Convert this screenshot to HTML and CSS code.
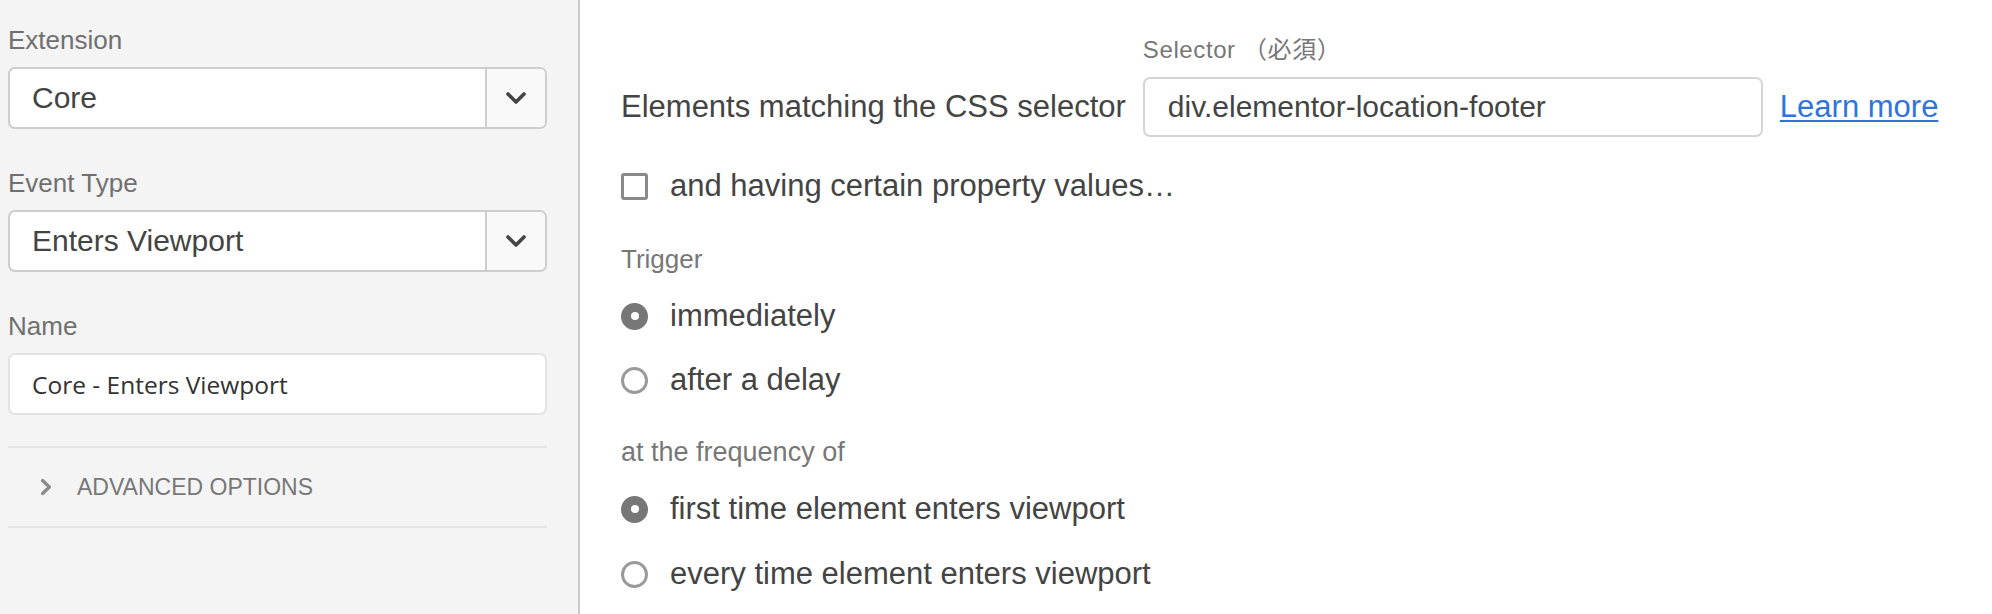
FILE: index.html
```html
<!DOCTYPE html>
<html lang="en">
<head>
<meta charset="utf-8">
<title>Enters Viewport</title>
<link rel="stylesheet" href="styles.css">
</head>
<body>
<div class="page">
  <aside class="sidebar">
    <div class="group">
      <div class="label">Extension</div>
      <div class="select">
        <div class="select-value">Core</div>
        <div class="select-arrow">
          <svg width="20" height="12" viewBox="0 0 20 12"><polyline points="2,2 10,10 18,2" fill="none" stroke="#444" stroke-width="3.6" stroke-linecap="round" stroke-linejoin="round"/></svg>
        </div>
      </div>
    </div>
    <div class="group">
      <div class="label">Event Type</div>
      <div class="select">
        <div class="select-value">Enters Viewport</div>
        <div class="select-arrow">
          <svg width="20" height="12" viewBox="0 0 20 12"><polyline points="2,2 10,10 18,2" fill="none" stroke="#444" stroke-width="3.6" stroke-linecap="round" stroke-linejoin="round"/></svg>
        </div>
      </div>
    </div>
    <div class="group">
      <div class="label">Name</div>
      <div class="text-input">Core - Enters Viewport</div>
    </div>
    <div class="divider"></div>
    <div class="advanced">
      <svg class="adv-chevron" width="12" height="18" viewBox="0 0 12 18"><polyline points="2.5,2.5 9.5,9 2.5,15.5" fill="none" stroke="#8a8a8a" stroke-width="3.2" stroke-linecap="round" stroke-linejoin="round"/></svg>
      <span class="adv-text">ADVANCED OPTIONS</span>
    </div>
    <div class="divider"></div>
  </aside>
  <main class="content">
    <div class="selector-row">
      <div class="row-text">Elements matching the CSS selector</div>
      <div class="field">
        <div class="field-label">Selector （必須）</div>
        <div class="field-input">div.elementor-location-footer</div>
      </div>
      <a class="learn" href="#">Learn more</a>
    </div>
    <div class="check-row">
      <span class="checkbox"></span>
      <span class="option-text">and having certain property values…</span>
    </div>
    <div class="section-label trigger-label">Trigger</div>
    <div class="radio-list">
      <div class="radio-row"><span class="radio checked"></span><span class="option-text">immediately</span></div>
      <div class="radio-row"><span class="radio"></span><span class="option-text">after a delay</span></div>
    </div>
    <div class="section-label freq-label">at the frequency of</div>
    <div class="radio-list freq-list">
      <div class="radio-row"><span class="radio checked"></span><span class="option-text">first time element enters viewport</span></div>
      <div class="radio-row"><span class="radio"></span><span class="option-text">every time element enters viewport</span></div>
    </div>
  </main>
</div>
</body>
</html>
```
FILE: styles.css
```css
* { box-sizing: border-box; }
html, body { margin: 0; padding: 0; }
body {
  font-family: "Liberation Sans", Arial, sans-serif;
  color: #444;
  background: #fff;
}
.page {
  display: flex;
  width: 1992px;
  height: 614px;
  overflow: hidden;
}
.sidebar {
  width: 580px;
  flex: 0 0 580px;
  background: #f4f4f4;
  border-right: 2px solid #cbcbcb;
  padding: 25px 31px 0 8px;
}
.group { margin-bottom: 39px; }
.group:nth-child(3) { margin-bottom: 31px; }
.label {
  font-size: 26px;
  line-height: 30px;
  height: 30px;
  color: #707070;
  margin-bottom: 12px;
}
.select {
  display: flex;
  height: 62px;
  background: #fff;
  border: 2px solid #cdcdcd;
  border-radius: 7px;
  overflow: hidden;
}
.select-value {
  flex: 1;
  display: flex;
  align-items: center;
  padding-left: 22px;
  font-size: 30px;
  color: #444;
}
.select-arrow {
  width: 60px;
  border-left: 2px solid #cdcdcd;
  background: #f9f9f9;
  display: flex;
  align-items: center;
  justify-content: center;
}
.text-input {
  height: 62px;
  background: #fff;
  border: 2px solid #e3e3e3;
  border-radius: 7px;
  display: flex;
  align-items: center;
  padding-left: 22px;
  font-family: "Open Sans", "Noto Sans", sans-serif;
  font-size: 24.5px;
  font-weight: 500;
  color: #333;
}
.divider {
  height: 2px;
  background: #e3e3e3;
}
.advanced {
  height: 78px;
  display: flex;
  align-items: center;
  padding-left: 32px;
}
.adv-chevron { display: block; margin-right: 25px; }
.adv-text {
  font-size: 23px;
  color: #777;
}
.content {
  flex: 1;
  padding: 36px 0 0 41px;
}
.selector-row {
  display: flex;
  align-items: flex-end;
  gap: 17px;
}
.row-text {
  height: 60px;
  display: flex;
  align-items: center;
  font-size: 31px;
  color: #444;
  white-space: nowrap;
}
.field { display: flex; flex-direction: column; }
.field-label {
  font-size: 24px;
  line-height: 28px;
  height: 28px;
  color: #777;
  margin-bottom: 13px;
  letter-spacing: 0.6px;
  font-family: "Liberation Sans", "Noto Sans CJK JP", sans-serif;
}
.field-input {
  width: 620px;
  height: 60px;
  border: 2px solid #d5d5d5;
  border-radius: 7px;
  display: flex;
  align-items: center;
  padding-left: 23px;
  font-size: 30px;
  color: #444;
}
.learn {
  height: 60px;
  display: flex;
  align-items: center;
  font-size: 31px;
  color: #2f74dc;
  text-decoration: underline;
  text-decoration-thickness: 2px;
  text-underline-offset: 3px;
}
.check-row {
  margin-top: 29px;
  height: 40px;
  display: flex;
  align-items: center;
  gap: 22px;
}
.checkbox {
  width: 27px;
  height: 27px;
  border: 3px solid #8a8a8a;
  border-radius: 3px;
  background: #fff;
  flex: 0 0 auto;
}
.option-text {
  font-size: 31px;
  color: #444;
  white-space: nowrap;
}
.section-label {
  font-size: 26px;
  line-height: 30px;
  height: 30px;
  color: #777;
}
.trigger-label { margin-top: 38px; }
.freq-label { margin-top: 37px; font-size: 27px; }
.radio-list {
  margin-top: 22px;
  display: flex;
  flex-direction: column;
  gap: 24px;
}
.freq-list { gap: 25px; }
.radio-row {
  height: 40px;
  display: flex;
  align-items: center;
  gap: 22px;
}
.radio {
  width: 27px;
  height: 27px;
  border-radius: 50%;
  border: 3px solid #9a9a9a;
  background: #fff;
  flex: 0 0 auto;
  display: flex;
  align-items: center;
  justify-content: center;
}
.radio.checked {
  border: none;
  background: #777;
}
.radio.checked::after {
  content: "";
  width: 8px;
  height: 8px;
  border-radius: 50%;
  background: #fff;
}
```
